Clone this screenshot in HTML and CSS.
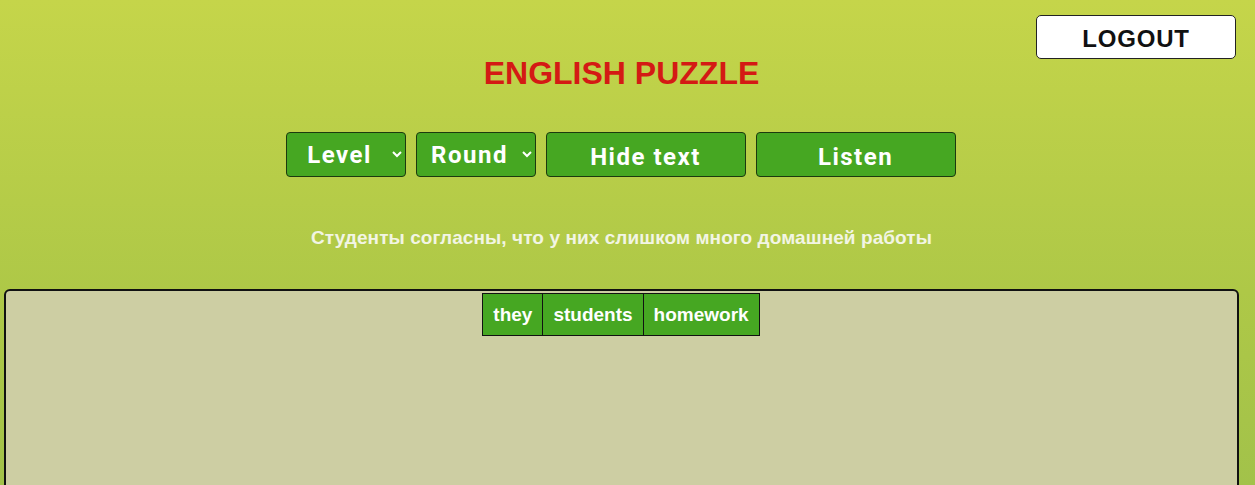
FILE: index.html
```html
<!DOCTYPE html>
<html lang="en">
<head>
<meta charset="utf-8">
<title>English Puzzle</title>
<link rel="stylesheet" href="styles.css">
</head>
<body>
<div class="page">
  <header class="top">
    <button class="logout">LOGOUT</button>
  </header>
  <h1 class="title">ENGLISH PUZZLE</h1>
  <div class="controls">
    <select class="ctrl select"><option>Level</option></select>
    <select class="ctrl select"><option>Round</option></select>
    <button class="ctrl btn">Hide text</button>
    <button class="ctrl btn">Listen</button>
  </div>
  <p class="hint">Студенты согласны, что у них слишком много домашней работы</p>
  <section class="board">
    <div class="words">
      <span class="word">they</span><span class="word">students</span><span class="word">homework</span>
    </div>
  </section>
</div>
</body>
</html>
```
FILE: styles.css
```css
html, body {
  margin: 0;
  padding: 0;
  height: 100%;
}
body {
  background: linear-gradient(180deg, #c5d54a 0%, #aec847 60%, #a2c24a 100%);
  font-family: "Liberation Sans", Arial, sans-serif;
  overflow: hidden;
}
.page {
  width: 1243px;
  display: flex;
  flex-direction: column;
  align-items: center;
}
.top {
  align-self: stretch;
  display: flex;
  justify-content: flex-end;
  padding: 15px 7px 0 0;
  height: 44px;
}
.logout {
  width: 200px;
  height: 44px;
  background: #fff;
  border: 1px solid #222;
  border-radius: 5px;
  font-family: "Liberation Sans", Arial, sans-serif;
  font-weight: bold;
  font-size: 24px;
  letter-spacing: 0.8px;
  color: #111;
  padding: 4px 0 0;
}
.title {
  margin: -6px 0 0;
  font-size: 32px;
  line-height: 40px;
  color: #d41a14;
  font-weight: bold;
}
.controls {
  display: flex;
  gap: 10px;
  margin-top: 39px;
  margin-left: -2px;
}
.ctrl {
  height: 45px;
  background: #46a722;
  border: 1px solid #1c3a0e;
  border-radius: 4px;
  color: #fff;
  font-family: Roboto, "Liberation Sans", sans-serif;
  font-weight: bold;
  font-size: 24px;
  letter-spacing: 1.5px;
  padding: 0;
}
.select {
  width: 120px;
  padding: 0;
  text-align: center;
  text-align-last: center;
}
.btn {
  width: 200px;
  padding-top: 4px;
}
.hint {
  margin: 50px 0 0;
  font-size: 19px;
  line-height: 22px;
  font-weight: bold;
  letter-spacing: 0.08px;
  color: #f2f5e4;
}
.board {
  align-self: stretch;
  margin: 40px 4px 0;
  height: 260px;
  background: #cdcea3;
  border: 2px solid #111;
  border-radius: 6px;
  padding-top: 2px;
}
.words {
  display: flex;
  justify-content: center;
}
.word {
  height: 41px;
  display: flex;
  align-items: center;
  padding: 0 10px;
  background: #46a722;
  border: 1px solid #111;
  margin-left: -1px;
  color: #fff;
  font-weight: bold;
  font-size: 19px;
}
```
